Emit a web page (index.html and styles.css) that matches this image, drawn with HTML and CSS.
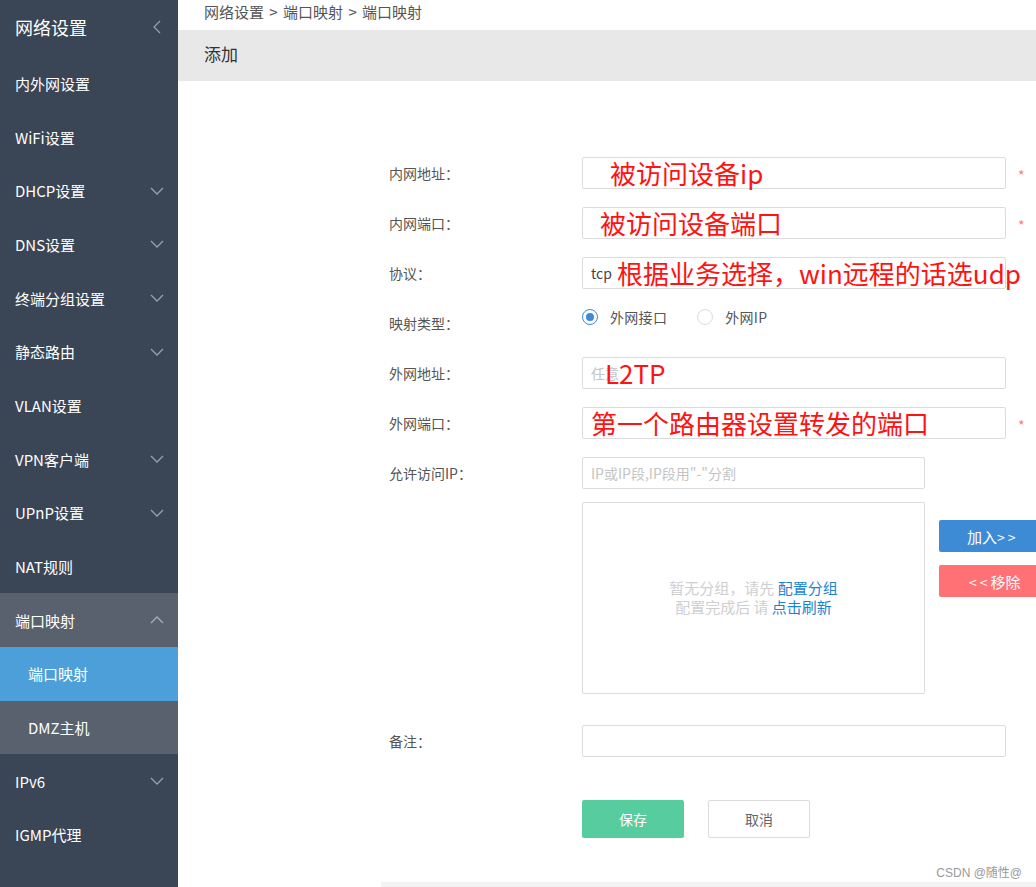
FILE: index.html
```html
<!DOCTYPE html>
<html lang="zh">
<head>
<meta charset="utf-8">
<title>端口映射</title>
<link rel="stylesheet" href="styles.css">
</head>
<body>
<div class="page">
  <aside class="sidebar">
    <div class="side-head">
      <span>网络设置</span>
      <svg class="back" width="8" height="14" viewBox="0 0 8 14"><path d="M7 1 L1 7 L7 13" fill="none" stroke="#9aa1ab" stroke-width="1.2"/></svg>
    </div>
    <div class="nav-item">内外网设置</div>
    <div class="nav-item">WiFi设置</div>
    <div class="nav-item">DHCP设置<svg class="chev" width="14" height="8" viewBox="0 0 14 8"><path d="M1 1 L7 7 L13 1" fill="none" stroke="#9aa1ab" stroke-width="1.3"/></svg></div>
    <div class="nav-item">DNS设置<svg class="chev" width="14" height="8" viewBox="0 0 14 8"><path d="M1 1 L7 7 L13 1" fill="none" stroke="#9aa1ab" stroke-width="1.3"/></svg></div>
    <div class="nav-item">终端分组设置<svg class="chev" width="14" height="8" viewBox="0 0 14 8"><path d="M1 1 L7 7 L13 1" fill="none" stroke="#9aa1ab" stroke-width="1.3"/></svg></div>
    <div class="nav-item">静态路由<svg class="chev" width="14" height="8" viewBox="0 0 14 8"><path d="M1 1 L7 7 L13 1" fill="none" stroke="#9aa1ab" stroke-width="1.3"/></svg></div>
    <div class="nav-item">VLAN设置</div>
    <div class="nav-item">VPN客户端<svg class="chev" width="14" height="8" viewBox="0 0 14 8"><path d="M1 1 L7 7 L13 1" fill="none" stroke="#9aa1ab" stroke-width="1.3"/></svg></div>
    <div class="nav-item">UPnP设置<svg class="chev" width="14" height="8" viewBox="0 0 14 8"><path d="M1 1 L7 7 L13 1" fill="none" stroke="#9aa1ab" stroke-width="1.3"/></svg></div>
    <div class="nav-item">NAT规则</div>
    <div class="nav-item open">端口映射<svg class="chev" width="14" height="8" viewBox="0 0 14 8"><path d="M1 7 L7 1 L13 7" fill="none" stroke="#a9aeb6" stroke-width="1.3"/></svg></div>
    <div class="nav-item sub active">端口映射</div>
    <div class="nav-item sub">DMZ主机</div>
    <div class="nav-item">IPv6<svg class="chev" width="14" height="8" viewBox="0 0 14 8"><path d="M1 1 L7 7 L13 1" fill="none" stroke="#9aa1ab" stroke-width="1.3"/></svg></div>
    <div class="nav-item">IGMP代理</div>
  </aside>

  <main class="main">
    <div class="crumb">网络设置 &gt; 端口映射 &gt; 端口映射</div>
    <div class="title-bar">添加</div>

    <form class="form">
      <div class="row">
        <label class="lbl">内网地址：</label>
        <div class="field">
          <div class="input"></div>
          <span class="note" style="left:28px">被访问设备ip</span>
        </div>
        <span class="req">*</span>
      </div>
      <div class="row">
        <label class="lbl">内网端口：</label>
        <div class="field">
          <div class="input"></div>
          <span class="note" style="left:18px">被访问设备端口</span>
        </div>
        <span class="req">*</span>
      </div>
      <div class="row">
        <label class="lbl">协议：</label>
        <div class="field">
          <div class="input"><span class="val">tcp</span></div>
          <span class="note" style="left:35px">根据业务选择，win远程的话选udp</span>
        </div>
      </div>
      <div class="row radio-row">
        <label class="lbl">映射类型：</label>
        <div class="radios">
          <span class="radio on"></span><span class="rtext">外网接口</span>
          <span class="radio"></span><span class="rtext">外网IP</span>
        </div>
      </div>
      <div class="row">
        <label class="lbl">外网地址：</label>
        <div class="field">
          <div class="input"><span class="ph">任意</span></div>
          <span class="note" style="left:23px">L2TP</span>
        </div>
      </div>
      <div class="row">
        <label class="lbl">外网端口：</label>
        <div class="field">
          <div class="input"></div>
          <span class="note" style="left:9px">第一个路由器设置转发的端口</span>
        </div>
        <span class="req">*</span>
      </div>
      <div class="row">
        <label class="lbl">允许访问IP：</label>
        <div class="input short"><span class="ph">IP或IP段,IP段用"-"分割</span></div>
      </div>
      <div class="row box-row">
        <span class="lbl"></span>
        <div class="box">
          <p>暂无分组，请先 <a>配置分组</a></p>
          <p>配置完成后 请 <a>点击刷新</a></p>
        </div>
        <div class="side-btns">
          <button type="button" class="btn-add">加入<span class="arr">&gt;&gt;</span></button>
          <button type="button" class="btn-del"><span class="arr">&lt;&lt;</span>移除</button>
        </div>
      </div>
      <div class="row memo-row">
        <label class="lbl">备注：</label>
        <div class="input"></div>
      </div>
      <div class="actions">
        <button type="button" class="btn-save">保存</button>
        <button type="button" class="btn-cancel">取消</button>
      </div>
    </form>
    <div class="bottom-bar"></div>
    <div class="watermark">CSDN @随性@</div>
  </main>
</div>
</body>
</html>
```

FILE: styles.css
```css
* { box-sizing: border-box; }
html, body { margin: 0; padding: 0; }
body {
  font-family: "Noto Sans CJK SC", "Liberation Sans", sans-serif;
  background: #fff;
  overflow: hidden;
}
.page {
  display: flex;
  width: 1036px;
  height: 887px;
  overflow: hidden;
}
.sidebar {
  width: 178px;
  flex: none;
  background: #3a4555;
  color: #fff;
}
.side-head {
  height: 56.5px;
  display: flex;
  align-items: center;
  justify-content: space-between;
  padding: 0 17px 2px 15px;
  font-size: 18px;
  line-height: 1;
}
.nav-item {
  height: 53.7px;
  display: flex;
  align-items: center;
  justify-content: space-between;
  padding: 0 14px 0 15px;
  font-size: 15px;
  line-height: 1;
}
.nav-item.open { background: #59616e; }
.nav-item.sub { background: #59616e; padding-left: 28px; }
.nav-item.sub.active { background: #4d9fd9; }

.main {
  flex: 1;
  position: relative;
  min-width: 0;
}
.crumb {
  height: 30px;
  padding-left: 26px;
  font-size: 15px;
  line-height: 23px;
  color: #555;
  word-spacing: 2px;
}
.title-bar {
  height: 51px;
  background: #e8e8e8;
  padding: 0 0 4px 26px;
  display: flex;
  align-items: center;
  font-size: 17px;
  color: #333;
}
.form {
  padding: 76px 0 0 211px;
  margin: 0;
}
.row {
  display: flex;
  align-items: center;
  height: 32px;
  margin-bottom: 18px;
}
.lbl {
  width: 193px;
  flex: none;
  font-size: 14px;
  color: #555;
  line-height: 1;
}
.field {
  position: relative;
  flex: none;
  width: 424px;
  height: 32px;
}
.input {
  flex: none;
  width: 424px;
  height: 32px;
  border: 1px solid #dcdcdc;
  border-radius: 2px;
  background: #fff;
  display: flex;
  align-items: center;
  padding-left: 8px;
  font-size: 14px;
}
.input.short { width: 343px; }
.val { color: #444; }
.ph { color: #c4c4c4; font-size: 14px; }
.note {
  position: absolute;
  top: 0;
  height: 32px;
  display: flex;
  align-items: center;
  white-space: nowrap;
  font-size: 26px;
  color: #ff1212;
  line-height: 1;
}
.req {
  margin-left: 12px;
  color: #ff7a7a;
  font-size: 14px;
  line-height: 1;
  padding-top: 4px;
}
.radios {
  display: flex;
  align-items: center;
  align-self: flex-start;
  padding-top: 2px;
  font-size: 14px;
  color: #555;
}
.radio {
  width: 16px;
  height: 16px;
  flex: none;
  border: 1px solid #dcdcdc;
  border-radius: 50%;
  background: #fff;
  position: relative;
}
.radio.on { border-color: #3d8ad6; }
.radio.on::after {
  content: "";
  position: absolute;
  left: 3px;
  top: 3px;
  width: 8px;
  height: 8px;
  border-radius: 50%;
  background: #3d8ad6;
}
.rtext { margin: 0 30px 0 12px; line-height: 1; letter-spacing: 0.3px; }

.box-row {
  height: 192px;
  align-items: flex-start;
  margin-top: -5px;
  margin-bottom: 31px;
}
.box {
  flex: none;
  width: 343px;
  height: 192px;
  border: 1px solid #dcdcdc;
  border-radius: 2px;
  display: flex;
  flex-direction: column;
  justify-content: center;
  align-items: center;
  font-size: 15px;
  color: #cfcfcf;
  padding-bottom: 2px;
}
.box p { margin: 0; line-height: 19px; }
.box a { color: #1b84cf; }
.side-btns {
  flex: none;
  display: flex;
  flex-direction: column;
  gap: 13px;
  margin-left: 14px;
  padding-top: 18px;
}
.side-btns button {
  width: 110px;
  height: 32px;
  border: 0;
  border-radius: 2px;
  color: #fff;
  font-family: inherit;
  font-size: 15px;
  text-align: left;
  padding: 0 0 0 28px;
}
.arr { letter-spacing: 3px; font-size: 14px; }
.btn-add { background: #3e8bd5; }
.btn-del { background: #ff7175; padding-left: 30px !important; }

.memo-row { margin-bottom: 0; }
.actions {
  display: flex;
  gap: 24px;
  margin: 43px 0 0 193px;
}
.actions button {
  width: 102px;
  height: 38px;
  border-radius: 2px;
  font-family: inherit;
  font-size: 14px;
  padding: 0;
}
.btn-save { background: #57cc9f; border: 0; color: #fff; }
.btn-cancel { background: #fff; border: 1px solid #dcdcdc; color: #666; }

.bottom-bar {
  margin: 44px 0 0 203px;
  height: 10px;
  background: #f3f3f3;
}
.watermark {
  position: absolute;
  right: 14px;
  top: 863px;
  font-family: "Liberation Sans", "Noto Sans CJK SC", sans-serif;
  font-size: 12px;
  color: #999;
}
```
